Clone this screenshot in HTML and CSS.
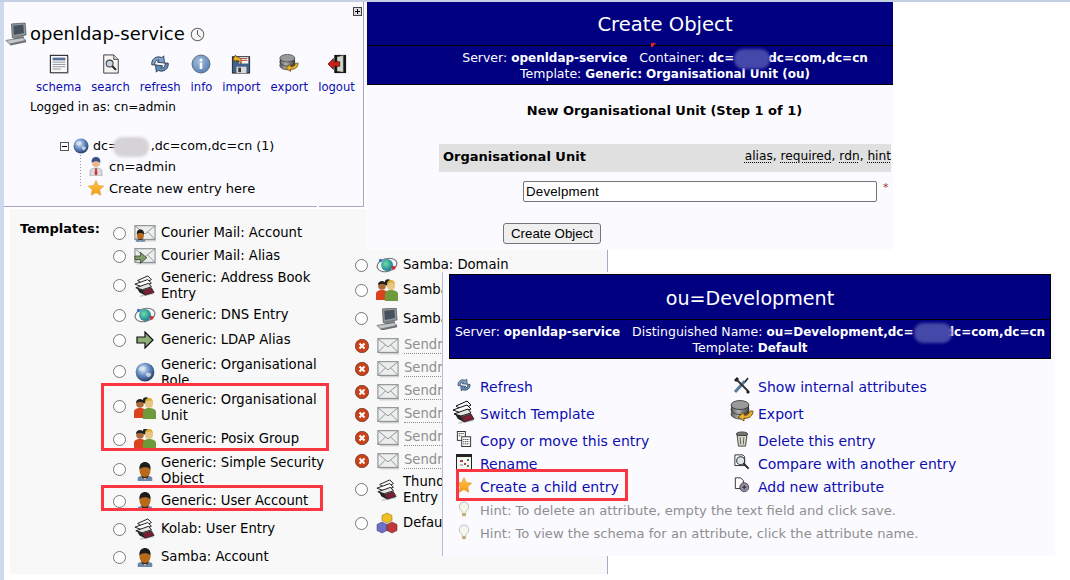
FILE: index.html
```html
<!DOCTYPE html>
<html lang="en">
<head>
  <meta charset="UTF-8" />
  <title>phpLDAPadmin</title>
  <link rel="stylesheet" href="styles.css">
</head>
<body>
  <svg class="sprite" xmlns="http://www.w3.org/2000/svg">
    <defs>
      <radialGradient id="g-globe" cx="0.4" cy="0.35" r="0.7"><stop offset="0" stop-color="#e8eef8"/><stop offset="0.45" stop-color="#6f94c8"/><stop offset="1" stop-color="#1c3566"/></radialGradient>
      <radialGradient id="g-green" cx="0.4" cy="0.4" r="0.6"><stop offset="0" stop-color="#6fe0a0"/><stop offset="1" stop-color="#1a7f9a"/></radialGradient>
      <radialGradient id="g-info" cx="0.4" cy="0.35" r="0.7"><stop offset="0" stop-color="#a4bede"/><stop offset="1" stop-color="#557fb4"/></radialGradient>
      <linearGradient id="g-db" x1="0" x2="1"><stop offset="0" stop-color="#5a5a5a"/><stop offset="0.4" stop-color="#b0b0b0"/><stop offset="1" stop-color="#444"/></linearGradient>
      <linearGradient id="g-star" x1="0" y1="0" x2="0" y2="1"><stop offset="0" stop-color="#ffc850"/><stop offset="1" stop-color="#f59a10"/></linearGradient>
    </defs>
    <symbol id="i-computer" viewBox="0 0 24 24">
      <path d="M7 1l15-1 1 13-15 3z" fill="#8f979d" stroke="#444" stroke-width=".7"/>
      <path d="M9 3l11-1 .7 9-11 2z" fill="#45525e"/>
      <path d="M9 16l11-2 1 2-11 3z" fill="#7c8287"/>
      <path d="M1 19l18-3 4 3-18 4z" fill="#c2c7ca" stroke="#555" stroke-width=".7"/>
      <path d="M5 23l18-4v2L6 24.500z" fill="#6a7075"/>
    </symbol>
    <symbol id="i-clock" viewBox="0 0 16 16">
      <circle cx="8" cy="8" r="6.700" fill="#f6f6f6" stroke="#666" stroke-width="1.100"/>
      <path d="M8 3.500V8l3.500 3" fill="none" stroke="#444" stroke-width="1"/>
    </symbol>
    <symbol id="i-schema" viewBox="0 0 22 22">
      <rect x="1.500" y="1.500" width="19" height="19" fill="#f7f7f7" stroke="#222" stroke-width="1.200"/>
      <rect x="4" y="4" width="14" height="3" fill="#5a6f9a"/>
      <path d="M4 9h14M4 11.500h14M4 14h14M4 16.500h9" stroke="#8b8f9a" stroke-width="1"/>
      <path d="M2 21h19V3" fill="none" stroke="#999" stroke-width="1"/>
    </symbol>
    <symbol id="i-search" viewBox="0 0 22 22">
      <path d="M3 1h11l5 5v15H3z" fill="#f4f4f2" stroke="#333" stroke-width="1"/>
      <path d="M14 1v5h5" fill="#ccc" stroke="#333" stroke-width=".8"/>
      <circle cx="9.500" cy="10.500" r="3.800" fill="#c8d2dc" stroke="#444" stroke-width="1.200"/>
      <path d="M12.500 13.500l4 4" stroke="#222" stroke-width="2.200"/>
    </symbol>
    <symbol id="i-refresh" viewBox="0 0 24 22">
      <path d="M3 12C2 6 8 1 14 4l2-2 1 8-8-1 2-2C8 6 6 8 6.500 12z" fill="#7ea2cc" stroke="#2c3a4a" stroke-width="1"/>
      <path d="M21 10c1 6-5 11-11 8l-2 2-1-8 8 1-2 2c3 1 5-1 4.500-5z" fill="#5f8abc" stroke="#2c3a4a" stroke-width="1"/>
    </symbol>
    <symbol id="i-info" viewBox="0 0 20 20">
      <circle cx="10" cy="10" r="9" fill="url(#g-info)" stroke="#4d5c70" stroke-width=".8"/>
      <circle cx="10" cy="6" r="1.500" fill="#fff"/>
      <rect x="8.700" y="8.500" width="2.600" height="6.500" fill="#fff"/>
    </symbol>
    <symbol id="i-import" viewBox="0 0 22 22">
      <rect x="1.500" y="3" width="19" height="18" fill="#41618c" stroke="#222" stroke-width="1"/>
      <rect x="9" y="3.500" width="10" height="7" fill="#f4f4f4"/>
      <path d="M10 5h8M10 7h8" stroke="#c0392b" stroke-width="1"/>
      <rect x="6" y="14" width="11" height="7" fill="#d8d8d8"/>
      <rect x="8" y="15" width="3" height="5" fill="#333"/>
      <path d="M2 6l3-5 1 2c4 0 6 3 5 8-1-3-3-4-5-4l1 2z" fill="#e8b030" stroke="#5a3c00" stroke-width=".8"/>
    </symbol>
    <symbol id="i-export" viewBox="0 0 24 24">
      <ellipse cx="10" cy="14" rx="9" ry="5" fill="url(#g-db)" stroke="#222" stroke-width=".7"/>
      <rect x="1" y="5" width="18" height="9" fill="url(#g-db)"/>
      <ellipse cx="10" cy="9.500" rx="9" ry="5" fill="url(#g-db)" stroke="#222" stroke-width=".7"/>
      <ellipse cx="10" cy="5" rx="9" ry="4.500" fill="#9a9a9a" stroke="#222" stroke-width=".7"/>
      <path d="M23 11c0 5-4 8-9 7v3l-6-4 6-5v3c3 1 5-1 6-4z" fill="#e8b030" stroke="#5a3c00" stroke-width=".8"/>
    </symbol>
    <symbol id="i-logout" viewBox="0 0 22 22">
      <rect x="8" y="1" width="13" height="20" fill="#151515"/>
      <path d="M11 3l7-1.500V20l-7-1z" fill="#cfd8c8" stroke="#333" stroke-width=".5"/>
      <path d="M1 11l6-6v3.500h7v5H7V17z" fill="#cc1f1a" stroke="#4a0f0c" stroke-width=".8"/>
    </symbol>
    <symbol id="i-globe" viewBox="0 0 16 16">
      <circle cx="8" cy="8" r="7.500" fill="url(#g-globe)"/>
      <path d="M3 5c2-2 4-2 5-1s-1 3-3 3-2-1-2-2zM9 9c2-1 4 0 4 1s-2 3-3 2-2-2-1-3z" fill="#dfe8f2" opacity=".75"/>
    </symbol>
    <symbol id="i-person" viewBox="0 0 16 20">
      <path d="M2 20v-5c0-2 3-3 6-3s6 1 6 3v5z" fill="#d8dbe0" stroke="#8a8f98" stroke-width=".5"/>
      <path d="M7.300 12h1.400l.8 6-1.500 1.500L6.500 18z" fill="#d0342c"/>
      <circle cx="8" cy="7" r="4" fill="#e8b890"/>
      <path d="M3.500 6.500C3.500 2 6 1 8 1s4.500 1 4.500 5.500L8 5z" fill="#3c4f86"/>
    </symbol>
    <symbol id="i-star" viewBox="0 0 16 16">
      <path d="M8 .5l2.300 5 5.400.6-4 3.700 1.100 5.400L8 12.500 3.200 15.200l1.100-5.400-4-3.700 5.400-.6z" fill="url(#g-star)" stroke="#d98a10" stroke-width=".5"/>
    </symbol>
    <symbol id="i-user" viewBox="0 0 22 22">
      <path d="M3 22v-3c0-2 4-3 8-3s8 1 8 3v3z" fill="#6b88a8"/>
      <path d="M10 16h2v4h-2z" fill="#e8eef4"/>
      <ellipse cx="11" cy="11" rx="6" ry="7" fill="#b86a1c"/>
      <path d="M5 10C4 3 8 1 11 1s7 2 6 9c-1-2-2-3-6-3s-5 1-6 3z" fill="#1c1c1c"/>
      <path d="M7 15c1 3 7 3 8 0l-1 4h-6z" fill="#4a2a10"/>
    </symbol>
    <symbol id="i-mail" viewBox="0 0 24 20">
      <rect x="1" y="2" width="22" height="15" fill="#eceeee" stroke="#8c8f90" stroke-width="1.200"/>
      <path d="M1 2l11 9 11-9M1 17l8-8M23 17l-8-8" fill="none" stroke="#8c8f90" stroke-width="1"/>
      <path d="M3 18.500h21V5" fill="none" stroke="#bbb" stroke-width="1"/>
    </symbol>
    <symbol id="i-mail-user" viewBox="0 0 24 20">
      <use href="#i-mail" width="24" height="20"/>
      <g transform="translate(0 5)"><use href="#i-user" width="14" height="15"/></g>
    </symbol>
    <symbol id="i-mail-arrow" viewBox="0 0 24 20">
      <use href="#i-mail" width="24" height="20"/>
      <path d="M1 10h6V6l7 6-7 6v-4H1z" fill="#7f9e6a" stroke="#333" stroke-width=".8"/>
    </symbol>
    <symbol id="i-book" viewBox="0 0 24 24">
      <path d="M6 24l16-3-2-3-13 4z" fill="#aaa" opacity=".6"/>
      <path d="M9 17l10-3 3 5-10 3z" fill="#7a1f35" stroke="#222" stroke-width=".8"/>
      <path d="M3 14l6 2 3 6-6-3z" fill="#222"/>
      <path d="M4 6l11-5 4 4-9 5z" fill="#f6f6f6" stroke="#111" stroke-width="1"/>
      <path d="M1 10l14-5 4 4-10 4z" fill="#fff" stroke="#111" stroke-width="1"/>
      <path d="M2 14l14-5 3 4-10 3z" fill="#e4e4e4" stroke="#111" stroke-width="1"/>
    </symbol>
    <symbol id="i-dns" viewBox="0 0 24 20">
      <ellipse cx="12" cy="10" rx="11" ry="7" fill="none" stroke="#777" stroke-width="1.300" transform="rotate(-15 12 10)"/>
      <circle cx="12" cy="10" r="6.500" fill="url(#g-green)"/>
      <circle cx="19" cy="13" r="2.200" fill="#c8363a"/>
      <circle cx="5" cy="5" r="1.800" fill="#3a70c8"/>
    </symbol>
    <symbol id="i-arrow" viewBox="0 0 18 18">
      <path d="M1 6h8V1l8 8-8 8v-5H1z" fill="#8fae78" stroke="#111" stroke-width="1.200"/>
    </symbol>
    <symbol id="i-group" viewBox="0 0 22 22">
      <circle cx="12" cy="3.500" r="3.200" fill="#222"/>
      <path d="M0 21v-6c0-3 3-4 6-4s6 1 6 4v6z" fill="#d9431e"/>
      <circle cx="6" cy="7" r="3.800" fill="#a86a38"/>
      <path d="M2 6c0-3 2-4 4-4s4 1 4 4c-2-1.500-6-1.500-8 0z" fill="#222"/>
      <path d="M9 22v-7c0-3 3-4 6-4s7 1 7 4v7z" fill="#6f9a3c"/>
      <circle cx="15" cy="7" r="4" fill="#e8c480"/>
      <path d="M11 6c0-4 2-5 4-5s4 1 4 5c-1-2-2-2.500-4-2.500S12 4 11 6z" fill="#d8b030"/>
    </symbol>
    <symbol id="i-cross" viewBox="0 0 14 14">
      <circle cx="7" cy="7" r="6.700" fill="#c8421a" stroke="#5a1f0c" stroke-width=".6"/>
      <path d="M4.500 4.500l5 5M9.500 4.500l-5 5" stroke="#fff" stroke-width="2"/>
    </symbol>
    <symbol id="i-cubes" viewBox="0 0 22 22">
      <path d="M11 1l5 2.500v5L11 11 6 8.500v-5z" fill="#f0c020" stroke="#806010" stroke-width=".5"/>
      <path d="M6 10l5 2.500v6L6 21l-5-2.500v-6z" fill="#6c70c8" stroke="#30306a" stroke-width=".5"/>
      <path d="M16 10l5 2.500v6L16 21l-5-2.500v-6z" fill="#c03838" stroke="#601818" stroke-width=".5"/>
    </symbol>
    <symbol id="i-bulb" viewBox="0 0 14 18">
      <path d="M7 1a5.500 5.500 0 0 0-3 10c1 1 1 2 1 3h4c0-1 0-2 1-3A5.500 5.500 0 0 0 7 1z" fill="#f6f6ea" stroke="#aaa" stroke-width=".8"/>
      <rect x="5" y="14" width="4" height="3" fill="#c4a860"/>
    </symbol>
    <symbol id="i-tools" viewBox="0 0 18 18">
      <path d="M2 16L12 5" stroke="#5a7a9a" stroke-width="3"/>
      <path d="M12 6l3-4" stroke="#222" stroke-width="1.500"/>
      <path d="M3 3l12 12" stroke="#333" stroke-width="2"/>
      <path d="M1 4l3-3 2 2-3 3zM13 16l2-2 2 2-2 2z" fill="#222"/>
    </symbol>
    <symbol id="i-trash" viewBox="0 0 16 18">
      <ellipse cx="8" cy="3.500" rx="6.500" ry="2.500" fill="#777" stroke="#222" stroke-width=".8"/>
      <path d="M2.500 5l1.500 12h8l1.500-12z" fill="#d8d8c8" stroke="#222" stroke-width=".9"/>
      <path d="M6 7l.5 8M10 7l-.5 8" stroke="#555" stroke-width="1"/>
    </symbol>
    <symbol id="i-compare" viewBox="0 0 18 18">
      <path d="M1 1h9l2 2v10H1z" fill="#fff" stroke="#222" stroke-width="1"/>
      <circle cx="7.500" cy="7.500" r="4.500" fill="#dbe4ec" stroke="#333" stroke-width="1.200"/>
      <path d="M10.500 10.500l6 6" stroke="#222" stroke-width="2.200"/>
    </symbol>
    <symbol id="i-add" viewBox="0 0 18 18">
      <path d="M1.500 1h6l3 3v9h-9z" fill="#fff" stroke="#222" stroke-width="1"/>
      <circle cx="11.500" cy="11.500" r="5" fill="#9a8ea8" stroke="#222" stroke-width=".8"/>
      <path d="M9 11.500h5M11.500 9v5" stroke="#222" stroke-width="1"/>
    </symbol>
    <symbol id="i-copy" viewBox="0 0 16 18">
      <rect x=".5" y=".5" width="9" height="10" fill="#fff" stroke="#222" stroke-width="1"/>
      <rect x="5.500" y="6.500" width="10" height="11" fill="#fff" stroke="#222" stroke-width="1"/>
      <path d="M7 9.500h7M7 12h7M7 14.500h7M2 3h6M2 5.500h3" stroke="#333" stroke-width="1" stroke-dasharray="1.500 .7"/>
    </symbol>
    <symbol id="i-rename" viewBox="0 0 16 16">
      <rect x=".5" y=".5" width="15" height="15" fill="#f4f4f0" stroke="#222" stroke-width="1"/>
      <rect x="1" y="1" width="14" height="2" fill="#222"/>
      <path d="M4 6h3v2H4zM8 9h2v2H8z" fill="#b04040"/>
      <path d="M11 5h2v2h-2zM11 11h2v2h-2z" fill="#3a8a4a"/>
      <path d="M4 11h3" stroke="#888"/>
    </symbol>
  </svg>

  <div class="desk">

    <section class="win win-templates">
      <div class="templates-label">Templates:</div>
      <div class="tpl-col">
        <label class="tpl tpl-24"><input type="radio" name="tpl"><span class="tpl-icon"><svg class="ic-22"><use href="#i-mail-user"/></svg></span><span class="tpl-name">Courier Mail: Account</span></label>
        <label class="tpl tpl-22"><input type="radio" name="tpl"><span class="tpl-icon"><svg class="ic-22"><use href="#i-mail-arrow"/></svg></span><span class="tpl-name">Courier Mail: Alias</span></label>
        <label class="tpl tpl-37"><input type="radio" name="tpl"><span class="tpl-icon"><svg class="ic-22"><use href="#i-book"/></svg></span><span class="tpl-name">Generic: Address Book Entry</span></label>
        <label class="tpl tpl-22"><input type="radio" name="tpl"><span class="tpl-icon"><svg class="ic-22"><use href="#i-dns"/></svg></span><span class="tpl-name">Generic: DNS Entry</span></label>
        <label class="tpl tpl-28"><input type="radio" name="tpl"><span class="tpl-icon"><svg class="ic-18"><use href="#i-arrow"/></svg></span><span class="tpl-name">Generic: LDAP Alias</span></label>
        <label class="tpl tpl-cut"><input type="radio" name="tpl"><span class="tpl-icon"><svg class="ic-20"><use href="#i-globe"/></svg></span><span class="tpl-name">Generic: Organisational Role</span></label>
        <label class="tpl tpl-44 tpl-low"><input type="radio" name="tpl"><span class="tpl-icon"><svg class="ic-22"><use href="#i-group"/></svg></span><span class="tpl-name">Generic: Organisational Unit</span></label>
        <label class="tpl tpl-20"><input type="radio" name="tpl"><span class="tpl-icon"><svg class="ic-22"><use href="#i-group"/></svg></span><span class="tpl-name">Generic: Posix Group</span></label>
        <label class="tpl tpl-42 tpl-low"><input type="radio" name="tpl"><span class="tpl-icon"><svg class="ic-20"><use href="#i-user"/></svg></span><span class="tpl-name">Generic: Simple Security Object</span></label>
        <label class="tpl tpl-20"><input type="radio" name="tpl"><span class="tpl-icon"><svg class="ic-20"><use href="#i-user"/></svg></span><span class="tpl-name">Generic: User Account</span></label>
        <label class="tpl tpl-36"><input type="radio" name="tpl"><span class="tpl-icon"><svg class="ic-22"><use href="#i-book"/></svg></span><span class="tpl-name">Kolab: User Entry</span></label>
        <label class="tpl tpl-20"><input type="radio" name="tpl"><span class="tpl-icon"><svg class="ic-20"><use href="#i-user"/></svg></span><span class="tpl-name">Samba: Account</span></label>
      </div>
      <div class="tpl-col tpl-col-2">
        <label class="tpl tpl-24"><input type="radio" name="tpl"><span class="tpl-icon"><svg class="ic-22"><use href="#i-dns"/></svg></span><span>Samba: Domain</span></label>
        <label class="tpl tpl-26 tpl-behind"><input type="radio" name="tpl"><span class="tpl-icon"><svg class="ic-22"><use href="#i-group"/></svg></span><span>Samba: Group</span></label>
        <label class="tpl tpl-31 tpl-behind"><input type="radio" name="tpl"><span class="tpl-icon"><svg class="ic-22"><use href="#i-computer"/></svg></span><span>Samba: Machine</span></label>
        <div class="tpl tpl-23 tpl-behind tpl-off"><svg class="ic-14"><use href="#i-cross"/></svg><span class="tpl-icon"><svg class="ic-22"><use href="#i-mail"/></svg></span><span>Sendmail: Alias</span></div>
        <div class="tpl tpl-23 tpl-behind tpl-off"><svg class="ic-14"><use href="#i-cross"/></svg><span class="tpl-icon"><svg class="ic-22"><use href="#i-mail"/></svg></span><span>Sendmail: Cluster</span></div>
        <div class="tpl tpl-23 tpl-behind tpl-off"><svg class="ic-14"><use href="#i-cross"/></svg><span class="tpl-icon"><svg class="ic-22"><use href="#i-mail"/></svg></span><span>Sendmail: Domain</span></div>
        <div class="tpl tpl-23 tpl-behind tpl-off"><svg class="ic-14"><use href="#i-cross"/></svg><span class="tpl-icon"><svg class="ic-22"><use href="#i-mail"/></svg></span><span>Sendmail: Relay</span></div>
        <div class="tpl tpl-23 tpl-behind tpl-off"><svg class="ic-14"><use href="#i-cross"/></svg><span class="tpl-icon"><svg class="ic-22"><use href="#i-mail"/></svg></span><span>Sendmail: User</span></div>
        <div class="tpl tpl-23 tpl-behind tpl-off"><svg class="ic-14"><use href="#i-cross"/></svg><span class="tpl-icon"><svg class="ic-22"><use href="#i-mail"/></svg></span><span>Sendmail: Virtual</span></div>
        <label class="tpl tpl-35 tpl-behind"><input type="radio" name="tpl"><span class="tpl-icon"><svg class="ic-22"><use href="#i-book"/></svg></span><span>Thunderbird:<br>Entry</span></label>
        <label class="tpl tpl-32 tpl-behind"><input type="radio" name="tpl" ><span class="tpl-icon"><svg class="ic-22"><use href="#i-cubes"/></svg></span><span>Default</span></label>
      </div>
    </section>

    <section class="win win-tree">
      <svg class="tree-expand" viewBox="0 0 9 9"><rect x=".5" y=".5" width="8" height="8" fill="#ddd" stroke="#444"/><path d="M2 4.500h5M4.500 2v5" stroke="#000"/></svg>
      <h1 class="tree-title"><svg class="tree-server"><use href="#i-computer"/></svg>openldap-service<svg class="tree-clock"><use href="#i-clock"/></svg></h1>
      <nav class="tools">
        <a class="tool"><svg class="ic-20"><use href="#i-schema"/></svg>schema</a>
        <a class="tool"><svg class="ic-20"><use href="#i-search"/></svg>search</a>
        <a class="tool"><svg class="ic-22"><use href="#i-refresh"/></svg>refresh</a>
        <a class="tool"><svg class="ic-20"><use href="#i-info"/></svg>info</a>
        <a class="tool"><svg class="ic-20"><use href="#i-import"/></svg>import</a>
        <a class="tool"><svg class="ic-20"><use href="#i-export"/></svg>export</a>
        <a class="tool"><svg class="ic-20"><use href="#i-logout"/></svg>logout</a>
      </nav>
      <div class="logged">Logged in as: cn=admin</div>
      <div class="tree">
        <div class="tree-root">
          <svg class="tree-minus" viewBox="0 0 9 9"><rect x=".5" y=".5" width="8" height="8" fill="#fff" stroke="#555"/><path d="M2 4.500h5" stroke="#000"/></svg>
          <svg class="ic-16"><use href="#i-globe"/></svg>
          <span>dc=<i class="blur blur-light"></i>,dc=com,dc=cn (1)</span>
        </div>
        <div class="tree-kids">
          <div class="tree-node tree-node-person"><svg class="tree-person"><use href="#i-person"/></svg><span>cn=admin</span></div>
          <div class="tree-node"><svg class="ic-16"><use href="#i-star"/></svg><span>Create new entry here</span></div>
        </div>
      </div>
    </section>

    <section class="win win-create">
      <header class="banner create-banner">
        <div class="banner-title create-title">Create Object</div>
        <div class="banner-sub create-sub">
          <div>Server: <b>openldap-service</b> &nbsp; Container: <b>dc=</b><i class="blur blur-navy"></i><b>dc=com,dc=cn</b></div>
          <div>Template: <b>Generic: Organisational Unit (ou)</b></div>
        </div>
        <span class="red-mark"></span>
      </header>
      <h3 class="step">New Organisational Unit (Step 1 of 1)</h3>
      <div class="attr-bar">
        <b>Organisational Unit</b>
        <span class="attr-notes"><u>alias</u>, <u>required</u>, <u>rdn</u>, <u>hint</u></span>
      </div>
      <div class="attr-value">
        <input class="attr-input" type="text" value="Develpment"><span class="req">*</span>
      </div>
      <div class="create-actions"><button class="create-btn" type="button">Create Object</button></div>
    </section>

    <section class="win win-entry">
      <header class="banner entry-banner">
        <div class="banner-title entry-title">ou=Development</div>
        <div class="banner-sub entry-sub">
          <div>Server: <b>openldap-service</b> &nbsp; Distinguished Name: <b>ou=Development,dc=</b><i class="blur blur-navy blur-entry"></i><b>dc=com,dc=cn</b></div>
          <div>Template: <b>Default</b></div>
        </div>
      </header>
      <div class="actions">
        <a class="act"><span class="act-icon"><svg class="ic-16"><use href="#i-refresh"/></svg></span>Refresh</a>
        <a class="act"><span class="act-icon"><svg class="ic-18"><use href="#i-tools"/></svg></span>Show internal attributes</a>
        <a class="act"><span class="act-icon"><svg class="ic-24"><use href="#i-book"/></svg></span>Switch Template</a>
        <a class="act"><span class="act-icon"><svg class="ic-24"><use href="#i-export"/></svg></span>Export</a>
        <a class="act"><span class="act-icon"><svg class="ic-16"><use href="#i-copy"/></svg></span>Copy or move this entry</a>
        <a class="act"><span class="act-icon"><svg class="ic-16"><use href="#i-trash"/></svg></span>Delete this entry</a>
        <a class="act"><span class="act-icon"><svg class="ic-16"><use href="#i-rename"/></svg></span>Rename</a>
        <a class="act"><span class="act-icon"><svg class="ic-16"><use href="#i-compare"/></svg></span>Compare with another entry</a>
        <a class="act"><span class="act-icon"><svg class="ic-16"><use href="#i-star"/></svg></span>Create a child entry</a>
        <a class="act"><span class="act-icon"><svg class="ic-16"><use href="#i-add"/></svg></span>Add new attribute</a>
        <div class="act act-hint"><span class="act-icon"><svg class="ic-16"><use href="#i-bulb"/></svg></span>Hint: To delete an attribute, empty the text field and click save.</div>
        <div class="act act-hint"><span class="act-icon"><svg class="ic-16"><use href="#i-bulb"/></svg></span>Hint: To view the schema for an attribute, click the attribute name.</div>
      </div>
    </section>

    <div class="mark mark-groups"></div>
    <div class="mark mark-user"></div>
    <div class="mark mark-child"></div>
  </div>
</body>
</html>
```

FILE: styles.css
```css
html, body {
  margin: 0;
  padding: 0;
}
body {
  font-family: "DejaVu Sans", Verdana, sans-serif;
  font-size: 13px;
  color: #000;
  background: #fff;
}
.sprite {
  position: absolute;
  width: 0;
  height: 0;
}
svg {
  display: block;
  flex: none;
}
.ic-14 { width: 14px; height: 14px; }
.ic-16 { width: 16px; height: 16px; }
.ic-18 { width: 18px; height: 18px; }
.ic-20 { width: 20px; height: 20px; }
.ic-22 { width: 22px; height: 22px; }
.ic-24 { width: 24px; height: 24px; }

/* the screenshot is a collage of pasted windows */
.desk {
  position: relative;
  width: 1070px;
  height: 580px;
  overflow: hidden;
  background:
    linear-gradient(#c5cfe3, #c5cfe3) top left / 100% 2px no-repeat,
    linear-gradient(#cdd9ec, #cdd9ec) top left / 4px 100% no-repeat,
    #fff;
}
.win {
  position: absolute;
  box-sizing: border-box;
}

/* tree */
.win-tree {
  left: 4px;
  top: 2px;
  width: 360px;
  height: 205px;
  padding: 19px 0 0 1px;
  background: #fbfbff;
  border-right: 1px solid #a9a6c6;
  border-bottom: 1px solid #a9a6c6;
}
.win-tree::after {
  content: "";
  position: absolute;
  left: 313px;
  bottom: -1px;
  width: 2px;
  height: 1px;
  background: #fff;
}
.tree-expand {
  position: absolute;
  left: 349px;
  top: 5px;
  width: 9px;
  height: 9px;
}
.tree-title {
  display: flex;
  align-items: center;
  margin: 0;
  font-size: 18px;
  font-weight: normal;
  line-height: 26px;
}
.tree-server {
  width: 22px;
  height: 24px;
  margin-right: 3px;
}
.tree-clock {
  width: 15px;
  height: 15px;
  margin-left: 5px;
}
.tools {
  display: flex;
  gap: 10px;
  margin: 7px 0 0 31px;
}
.tool {
  display: flex;
  flex-direction: column;
  align-items: center;
  color: #0d0db0;
  font-size: 11.600px;
  line-height: 15px;
}
.tool svg {
  height: 20px;
  margin-bottom: 6px;
}
.logged {
  margin: 5px 0 0 25px;
  font-size: 12px;
  line-height: 15px;
}
.tree {
  margin: 22px 0 0 55px;
}
.tree-root {
  display: flex;
  align-items: center;
  gap: 4px;
  font-size: 12.700px;
  line-height: 18px;
}
.tree-minus {
  width: 9px;
  height: 9px;
}
.tree-kids {
  margin-left: 20px;
  padding: 0 0 0 8px;
  background:
    linear-gradient(to bottom, #999 50%, transparent 50%) left top / 1px 3px repeat-y;
  height: 33px;
}
.tree-node {
  display: flex;
  align-items: center;
  gap: 5px;
  height: 22px;
}
.tree-person {
  width: 16px;
  height: 20px;
}
.blur {
  display: inline-block;
  border-radius: 9px;
  filter: blur(1.500px);
}
.blur-light {
  width: 36px;
  height: 20px;
  margin: -6px 2px -6px -6px;
  vertical-align: middle;
  background: #d5d2d8;
}
.blur-navy {
  width: 36px;
  height: 20px;
  margin: -6px -2px -6px 0;
  vertical-align: middle;
  background: #4448a8;
}
.blur-entry {
  width: 38px;
  margin-right: -6px;
}

/* navy page headers */
.banner {
  position: relative;
  background: #000080;
  color: #fff;
  text-align: center;
}
.banner-title {
  border-bottom: 1px solid #000;
}
.banner-sub {
  font-size: 12.500px;
  line-height: 15px;
}
.banner-sub b {
  font-size: 12px;
}
.win-create {
  left: 366px;
  top: 2px;
  width: 527px;
  height: 248px;
  background: #fbfbff;
}
.create-banner {
  margin-left: 1px;
}
.create-title {
  height: 43px;
  padding-left: 70px;
  font-size: 19.600px;
  line-height: 45px;
}
.create-sub {
  height: 39px;
  padding: 4px 0 0 70px;
  border-bottom: 1px solid #000;
  box-sizing: border-box;
}
.red-mark {
  position: absolute;
  left: 284px;
  top: 41px;
  width: 5px;
  height: 4px;
  background: #e8202a;
  clip-path: polygon(0 0, 100% 0, 30% 100%, 0 100%);
}
.step {
  margin: 18px 0 0;
  padding-left: 70px;
  font-size: 13px;
  line-height: 16px;
  text-align: center;
}
.attr-bar {
  display: flex;
  justify-content: space-between;
  align-items: center;
  box-sizing: border-box;
  height: 28px;
  margin: 25px 2px 0 73px;
  padding: 0 0 4px 4px;
  background: #e0e0e0;
}
.attr-notes {
  font-size: 12.200px;
  white-space: nowrap;
}
.attr-notes u {
  text-decoration: underline dotted;
  text-underline-offset: 2px;
}
.attr-value {
  display: flex;
  margin: 9px 0 0 157px;
}
.attr-input {
  box-sizing: border-box;
  width: 354px;
  height: 21px;
  padding: 0 2px;
  border: 1px solid #767676;
  border-radius: 2px;
  font-family: "Liberation Sans", Arial, sans-serif;
  font-size: 13.300px;
  letter-spacing: .2px;
}
.req {
  margin-left: 6px;
  color: #933;
  font-size: 11px;
}
.create-actions {
  margin: 21px 0 0 137px;
}
.create-btn {
  box-sizing: border-box;
  width: 98px;
  height: 21px;
  padding: 0;
  border: 1px solid #767676;
  border-radius: 3px;
  background: #efefef;
  font-family: "Liberation Sans", Arial, sans-serif;
  font-size: 13.300px;
  color: #000;
}

/* entry window */
.win-entry {
  left: 442px;
  top: 272px;
  width: 613px;
  height: 284px;
  padding: 2px 0 0 6px;
  background: #fbfbff;
  border-left: 1px solid #b5bcdd;
}
.entry-banner {
  width: 602px;
  box-sizing: border-box;
  border: 1px solid #000;
}
.entry-title {
  height: 44px;
  font-size: 19.100px;
  line-height: 47px;
}
.entry-sub {
  height: 38px;
  padding-top: 4px;
  box-sizing: border-box;
  white-space: nowrap;
}
.actions {
  display: grid;
  grid-template-columns: 278px 1fr;
  grid-template-rows: 23px 31px 23px 23px 23px 23px 23px;
  margin-top: 16px;
}
.act {
  display: flex;
  align-items: center;
  color: #0d0db0;
  font-size: 14px;
  white-space: nowrap;
}
.act-icon {
  display: flex;
  justify-content: center;
  width: 31px;
  margin-bottom: 4px;
  padding-right: 1px;
  box-sizing: border-box;
}
.act-hint {
  grid-column: 1 / 3;
  padding-top: 2px;
  box-sizing: border-box;
  color: #8f8f8f;
  font-size: 13.100px;
}

/* templates */
.win-templates {
  left: 10px;
  top: 209px;
  width: 598px;
  height: 365px;
  display: flex;
  padding: 12px 0 0 10px;
  background: #f8f8f8;
  border-right: 1px solid #a9a6c6;
}
.templates-label {
  width: 93px;
  font-weight: bold;
  line-height: 16px;
}
.tpl-col {
  width: 242px;
  flex: none;
}
.tpl-col-2 {
  margin-top: 32px;
}
.tpl {
  display: flex;
  align-items: center;
  overflow: hidden;
  font-size: 13.200px;
  line-height: 16px;
}
.tpl input {
  flex: none;
  width: 13px;
  height: 13px;
  margin: 0;
}
.tpl-name {
  max-width: 168px;
}
.tpl-icon {
  display: flex;
  justify-content: center;
  width: 24px;
  margin: 0 4px 0 7px;
  flex: none;
}
.tpl-20 { height: 20px; }
.tpl-22 { height: 22px; }
.tpl-23 { height: 23px; }
.tpl-24 { height: 24px; }
.tpl-26 { height: 26px; }
.tpl-28 { height: 28px; }
.tpl-31 { height: 31px; }
.tpl-32 { height: 32px; }
.tpl-35 { height: 35px; }
.tpl-36 { height: 36px; }
.tpl-37 { height: 37px; }
.tpl-42 { height: 42px; }
.tpl-44 { height: 44px; }
.tpl-cut {
  height: 31px;
  align-items: flex-start;
  padding-top: 3px;
  box-sizing: border-box;
}
.tpl-cut input {
  margin-top: 8px;
}
.tpl-cut .tpl-icon {
  margin-top: 5px;
}
.tpl-low {
  padding-top: 2px;
  box-sizing: border-box;
}
.tpl-low input {
  margin-top: -3px;
}
.tpl-behind {
  width: 87px;
  white-space: nowrap;
}
.tpl-off {
  color: #8f8f8f;
}
.tpl-off > span:last-child {
  border-bottom: 1px dotted #8f8f8f;
}

/* red annotation boxes */
.mark {
  position: absolute;
  box-sizing: border-box;
  border: 3px solid #fb3640;
}
.mark-groups {
  left: 101px;
  top: 383px;
  width: 228px;
  height: 68px;
}
.mark-user {
  left: 101px;
  top: 485px;
  width: 222px;
  height: 26px;
}
.mark-child {
  left: 456px;
  top: 469px;
  width: 172px;
  height: 32px;
}
```
